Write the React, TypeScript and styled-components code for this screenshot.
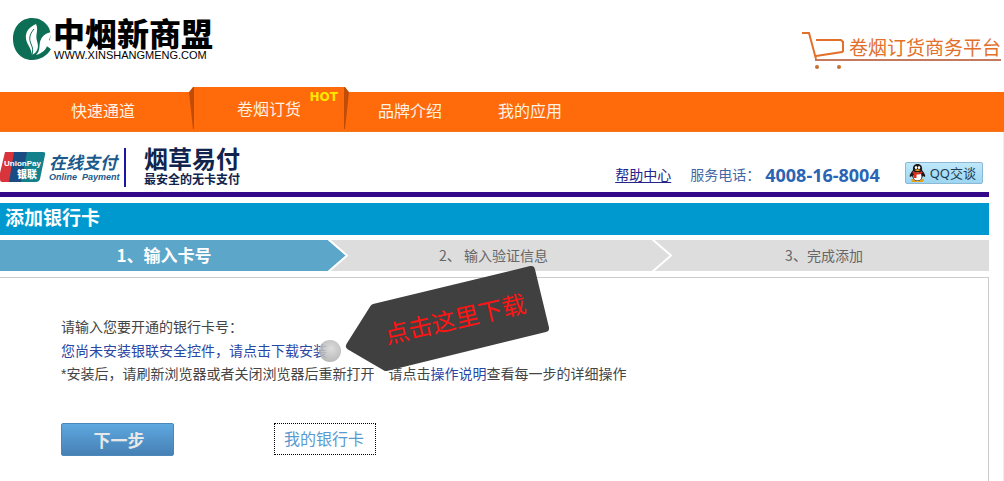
import React from "react";
import styled, { createGlobalStyle } from "styled-components";

const GlobalStyle = createGlobalStyle`
  * { box-sizing: border-box; }
  body {
    margin: 0;
    background: #fff;
    color: #444;
    font: 14px/24px "Liberation Sans", "Noto Sans CJK SC", sans-serif;
  }
  a { text-decoration: none; }
`;

const Page = styled.div`
  display: flex;
  flex-direction: column;
  min-height: 100vh;
`;

const Header = styled.header`
  display: flex;
  justify-content: space-between;
  align-items: flex-start;
  height: 92px;
  padding: 16px 3px 0 12px;
`;

const Brand = styled.a`
  display: flex;
  align-items: center;
  gap: 1px;
  color: #000;
`;

const BrandText = styled.span`
  display: flex;
  flex-direction: column;
`;

const BrandName = styled.span`
  font: 900 32px/33px "Noto Sans CJK SC", sans-serif;
`;

const BrandUrl = styled.span`
  padding-left: 1px;
  font-size: 11px;
  line-height: 13px;
`;

const Platform = styled.div`
  display: flex;
  padding-top: 14px;
  color: #e2702a;
`;

const PlatformName = styled.span`
  height: 31px;
  padding-left: 5px;
  border-bottom: 2px solid #c47a60;
  font: 400 19px/34px "Noto Sans CJK SC", sans-serif;
`;

const Nav = styled.nav`
  display: flex;
  height: 40px;
  padding-left: 43px;
  background: #ff6a0a;
  border-bottom: 1px solid #f07818;
`;

const NavLink = styled.a<{ $active?: boolean }>`
  position: relative;
  width: ${(p) => (p.$active ? "152px" : "120px")};
  height: ${(p) => (p.$active ? "44px" : "39px")};
  margin: ${(p) => (p.$active ? "-5px 5px 0 30px" : "0")};
  background: #ff6a0a;
  color: #fff2e4;
  font-size: 16px;
  line-height: ${(p) => (p.$active ? "46px" : "40px")};
  text-align: center;
`;

const Fold = styled.svg<{ $side: "left" | "right" }>`
  position: absolute;
  top: 0;
  ${(p) => p.$side}: -4px;
`;

const HotBadge = styled.span`
  position: absolute;
  top: 3px;
  right: 7px;
  color: #ffe800;
  font: bold 12px/14px "DejaVu Sans", sans-serif;
`;

const Main = styled.main`
  display: flex;
  flex: 1;
  flex-direction: column;
  padding-right: 14px;
  border-right: 1px solid #eee;
`;

const PayBar = styled.div`
  display: flex;
  justify-content: space-between;
  height: 65px;
  padding: 15px 6px 5px 0;
  border-bottom: 5px solid #330888;
`;

const PayBrands = styled.div`
  display: flex;
  align-items: center;
`;

const OnlinePay = styled.div`
  display: flex;
  flex-direction: column;
  height: 39px;
  padding: 4px 7px 0 3px;
  border-right: 2px solid #1c14a4;
  color: #1a5a8c;
  font: italic bold 17px/20px "Noto Sans CJK SC", sans-serif;
`;

const OnlinePayEn = styled.span`
  width: 68px;
  font: italic bold 9px/10px "Liberation Sans", sans-serif;
  white-space: pre;
`;

const EasyPay = styled.div`
  display: flex;
  flex-direction: column;
  padding-left: 18px;
  color: #10244e;
  font: bold 24px/24px "Noto Sans CJK SC", sans-serif;
`;

const EasyPaySlogan = styled.span`
  font-size: 12px;
  line-height: 18px;
`;

const Contact = styled.div`
  display: flex;
  align-items: flex-end;
  padding-bottom: 3px;
  color: #4468a4;
  line-height: 18px;
`;

const HelpLink = styled.a`
  margin-right: 19px;
  color: #24248c;
  text-decoration: underline;
  text-underline-offset: 2px;
`;

const Phone = styled.strong`
  margin: 0 25px 0 5px;
  color: #2a64b4;
  font: bold 18px/18px "Noto Sans", sans-serif;
`;

const ChatButton = styled.button`
  display: flex;
  align-items: center;
  gap: 4px;
  height: 22px;
  padding: 0 6px 0 3px;
  border: 1px solid #8cb8d4;
  border-radius: 2px;
  background: linear-gradient(#bfe8fa, #9cd6f2);
  color: #1c3c54;
  font: 13px/20px "Noto Sans", "Noto Sans CJK SC", sans-serif;
`;

const Title = styled.h1`
  margin: 6px 0 5px;
  padding: 0 0 5px 5px;
  background: #0099cf;
  color: #fff;
  font: bold 19px/27px "Noto Sans CJK SC", sans-serif;
`;

const Steps = styled.ol`
  display: grid;
  grid-template-columns: 328fr 324fr 337fr;
  margin: 0 0 6px;
  padding: 0;
  list-style: none;
`;

const Step = styled.li<{ $current?: boolean }>`
  position: relative;
  height: 31px;
  padding-left: ${(p) => (p.$current ? "0" : "7px")};
  background: ${(p) => (p.$current ? "#5ba6c9" : "#ddd")};
  color: ${(p) => (p.$current ? "#fff" : "#666")};
  font: ${(p) => (p.$current ? "bold 17px/30px" : "14px/30px")} "Noto Sans CJK SC", sans-serif;
  text-align: center;
`;

const Chevron = styled.svg`
  position: absolute;
  top: 0;
  left: -1px;
`;

const Panel = styled.section`
  flex: 1;
  padding: 37px 20px 24px 61px;
  border: solid #ccc;
  border-width: 1px 1px 0 0;
`;

const Line = styled.p`
  position: relative;
  margin: 0;
  line-height: 24px;
`;

const Hint = styled(Line)`
  line-height: 22px;
`;

const TextLink = styled.a`
  color: #2a46a4;
`;

const Aside = styled.span`
  margin-left: 14px;
`;

const Callout = styled.svg`
  position: absolute;
  top: -75px;
  left: 258px;
`;

const Actions = styled.div`
  display: flex;
  gap: 100px;
  margin-top: 38px;
`;

const NextButton = styled.button`
  width: 113px;
  height: 33px;
  padding: 1px 0 0 3px;
  border: 1px solid #4a88bc;
  border-radius: 2px;
  background: linear-gradient(#5ea8e0, #4680b4);
  color: #e8e8e8;
  font: bold 17px/30px "Noto Sans CJK SC", sans-serif;
`;

const CardsLink = styled.a`
  height: 32px;
  padding: 0 11px 0 9px;
  border: 1px dotted #000;
  color: #5a9ad0;
  font-size: 16px;
  line-height: 32px;
`;

const LeafLogo = () => (
  <svg width="40" height="46" viewBox="0 0 40 46" aria-hidden="true">
    <path
      fill="#0c6e54"
      d="M37 12C33 5 27 2 20 2C9 2 1 11 1 23s8 21 19 21c8 0 15-4 19-11l-4-3l-4 2l1-8l5 2q3-7 0-14z"
    />
    <path fill="#fff" d="M24 8c-7 3-11 8-10 15c1 6 5 8 6 16c6-3 7-8 5-14c-2-7 2-11-1-17z" />
    <path fill="#fff" d="M40 16c-7 1-11 5-12 10c-1 6 0 9-4 13c7-2 10-6 11-9l4 3l1-6l-3-3z" />
    <path fill="none" stroke="#0c6e54" strokeWidth="1" d="M22 13c-5 6-5 10-3 15c2 4 2 7 1 11" />
  </svg>
);

const Cart = () => (
  <svg width="42" height="41" viewBox="0 0 42 41" fill="none" aria-hidden="true">
    <path stroke="#e2702a" strokeWidth="2" d="M0 3h7l7 26M14 10h25l2 2v9l-1 1l-26 4" />
    <path stroke="#c47a60" strokeWidth="2" d="M13 30h29" />
    <circle cx="15" cy="37" r="2" fill="#c8702c" />
    <circle cx="37" cy="37" r="2" fill="#c8702c" />
  </svg>
);

const UnionPay = () => (
  <svg width="46" height="32" viewBox="0 0 46 32" role="img" aria-label="UnionPay 银联">
    <path fill="#d8343c" d="M5 1h12l-6 30H2q-2 0-2-3V22z" />
    <path fill="#1a4c84" d="M14 1h16l-6 30H9z" />
    <path fill="#14808c" d="M27 1h16q3 0 2 3l-5 24q-1 3-4 3H21z" />
    <text x="4" y="15" fill="#fff" fontFamily="Liberation Sans, sans-serif" fontSize="8" fontWeight="bold">
      UnionPay
    </text>
    <text x="17" y="27" fill="#fff" fontFamily="Noto Sans CJK SC, sans-serif" fontSize="10" fontWeight="900">
      银联
    </text>
  </svg>
);

const Penguin = () => (
  <svg width="17" height="18" viewBox="0 0 17 18" aria-hidden="true">
    <path fill="#e8a020" d="M2 15h6v3H3zM9 15h6l-1 3H9z" />
    <path fill="#201818" d="M8.500 0C5 0 3.500 2.500 4 6C2 9 0 11 1 13l2-1c1 3 3 5 5.500 5s4.500-2 5.500-5l2 1c1-2-1-4-3-7c.5-3.500-1-6-4.500-6z" />
    <ellipse cx="8.500" cy="12.500" rx="4" ry="4" fill="#fff" />
    <path fill="#d83020" d="M4 7q4.500 3 9 0l.5 2q-3 2-6 1.500V14H5v-4L3.500 9z" />
    <ellipse cx="7" cy="3.500" rx="1.200" ry="1.500" fill="#fff" />
    <ellipse cx="10" cy="3.500" rx="1.200" ry="1.500" fill="#fff" />
    <path fill="#f0a820" d="M5.500 6q3-1.500 6 0q-3 2-6 0z" />
  </svg>
);

const StepChevron = ({ fill }: { fill: string }) => (
  <Chevron width="22" height="31" viewBox="0 0 22 31" aria-hidden="true">
    <path d="M0 0h2l18 15.500L2 31H0z" fill={fill} />
    <path d="M1 -1l19 16.500L1 32" fill="none" stroke="#fff" strokeWidth="2" />
  </Chevron>
);

const DownloadCallout = () => (
  <Callout width="232" height="110" viewBox="0 0 232 110">
    <defs>
      <radialGradient id="knob" cx="0.55" cy="0.4" r="0.6">
        <stop offset="0" stopColor="#d8d8d8" />
        <stop offset="1" stopColor="#b0b0b0" />
      </radialGradient>
    </defs>
    <circle cx="11" cy="87" r="11" fill="url(#knob)" fillOpacity="0.88" />
    <path
      d="M55 44L212 6L226 64L67 103L31 82z"
      fill="#404040"
      stroke="#404040"
      strokeWidth="8"
      strokeLinejoin="round"
    />
    <text
      transform="translate(68 80) rotate(-13)"
      fill="#ff1414"
      fontFamily="Noto Sans CJK SC, sans-serif"
      fontSize="24"
      fontWeight="400"
    >
      点击这里下载
    </text>
  </Callout>
);

export default function App() {
  return (
    <Page>
      <GlobalStyle />
      <Header>
        <Brand href="#home">
          <LeafLogo />
          <BrandText>
            <BrandName>中烟新商盟</BrandName>
            <BrandUrl>WWW.XINSHANGMENG.COM</BrandUrl>
          </BrandText>
        </Brand>
        <Platform>
          <Cart />
          <PlatformName>卷烟订货商务平台</PlatformName>
        </Platform>
      </Header>

      <Nav>
        <NavLink href="#fast">快速通道</NavLink>
        <NavLink href="#order" $active>
          <Fold $side="left" width="5" height="44" viewBox="0 0 5 44" aria-hidden="true">
            <path fill="#c04c08" d="M4 0L0 5L4 42H5V0z" />
          </Fold>
          卷烟订货
          <HotBadge>HOT</HotBadge>
          <Fold $side="right" width="5" height="44" viewBox="0 0 5 44" aria-hidden="true">
            <path fill="#c04c08" d="M1 0L5 5L1 42H0V0z" />
          </Fold>
        </NavLink>
        <NavLink href="#brands">品牌介绍</NavLink>
        <NavLink href="#apps">我的应用</NavLink>
      </Nav>

      <Main>
        <PayBar>
          <PayBrands>
            <UnionPay />
            <OnlinePay>
              在线支付
              <OnlinePayEn>Online  Payment</OnlinePayEn>
            </OnlinePay>
            <EasyPay>
              烟草易付
              <EasyPaySlogan>最安全的无卡支付</EasyPaySlogan>
            </EasyPay>
          </PayBrands>
          <Contact>
            <HelpLink href="#help">帮助中心</HelpLink>
            <span>服务电话：</span>
            <Phone>4008-16-8004</Phone>
            <ChatButton type="button">
              <Penguin />
              QQ交谈
            </ChatButton>
          </Contact>
        </PayBar>

        <Title>添加银行卡</Title>

        <Steps>
          <Step $current>1、输入卡号</Step>
          <Step>
            <StepChevron fill="#5ba6c9" />
            2、 输入验证信息
          </Step>
          <Step>
            <StepChevron fill="#ddd" />
            3、完成添加
          </Step>
        </Steps>

        <Panel>
          <Line>请输入您要开通的银行卡号：</Line>
          <Line>
            <TextLink href="#download">您尚未安装银联安全控件，请点击下载安装</TextLink>
            <DownloadCallout />
          </Line>
          <Hint>
            *安装后，请刷新浏览器或者关闭浏览器后重新打开
            <Aside>
              请点击<TextLink href="#guide">操作说明</TextLink>查看每一步的详细操作
            </Aside>
          </Hint>
          <Actions>
            <NextButton type="button">下一步</NextButton>
            <CardsLink href="#cards">我的银行卡</CardsLink>
          </Actions>
        </Panel>
      </Main>
    </Page>
  );
}
